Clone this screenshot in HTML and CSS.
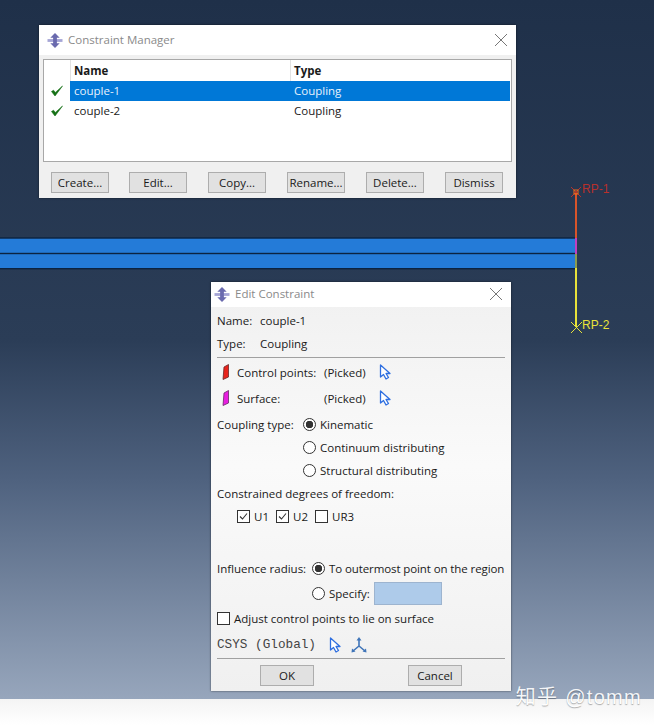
FILE: index.html
```html
<!DOCTYPE html>
<html lang="en">
<head>
  <meta charset="UTF-8" />
  <title>Constraint Manager</title>
  <link rel="stylesheet" href="styles.css">
</head>
<body>
  <svg width="0" height="0" class="defs">
    <symbol id="app" viewBox="0 0 16 16">
      <path d="M8 0 L13 5 H3 Z" fill="#6a6aae"/>
      <path d="M8 16 L13 11 H3 Z" fill="#6a6aae"/>
      <rect x="0" y="6.5" width="16" height="3" fill="#a5a5d6"/>
      <rect x="6" y="4" width="4" height="8" fill="#6a6aae"/>
    </symbol>
    <symbol id="arrow" viewBox="0 0 12 16">
      <path d="M1.5 1 V13 L4.5 10.5 L7 15 L9.5 13.5 L7 9.5 H11 Z" fill="#fff" stroke="#2f6fe0" stroke-width="1.3" stroke-linejoin="round"/>
    </symbol>
    <symbol id="check" viewBox="0 0 12 12">
      <path d="M0.5 6.5 L4 11 L11.5 1 L4.4 7.4 L2.5 5.2 Z" fill="#157015" stroke="#157015" stroke-width="0.6"/>
    </symbol>
    <symbol id="tick" viewBox="0 0 11 11">
      <path d="M2 5.5 L4.5 8 L9 2.5" fill="none" stroke="#333" stroke-width="1.1"/>
    </symbol>
  </svg>

  <!-- model viewport -->
  <svg class="model" width="654" height="725">
    <rect x="0" y="238" width="576" height="31" fill="#247bd8"/>
    <rect x="0" y="237.3" width="576" height="1.4" fill="#0c2340"/>
    <rect x="0" y="252.8" width="576" height="1.4" fill="#0c2340"/>
    <rect x="0" y="268" width="576" height="1.4" fill="#0c2340"/>
    <line x1="576" y1="192" x2="576" y2="240" stroke="#d8542a" stroke-width="2"/>
    <line x1="576" y1="238" x2="576" y2="254" stroke="#c03fc0" stroke-width="2"/>
    <line x1="576" y1="254" x2="576" y2="268" stroke="#8a9a50" stroke-width="2"/>
    <line x1="576" y1="268" x2="576" y2="327" stroke="#e8e23a" stroke-width="2"/>
    <path d="M571 187 L581 197 M581 187 L571 197" stroke="#b8302c" stroke-width="1"/>
    <rect x="574" y="190" width="4" height="4" fill="none" stroke="#f0701c" stroke-width="1"/>
    <path d="M571 322 L582 333 M582 322 L571 333" stroke="#e8e23a" stroke-width="1"/>
    <text x="582" y="193" class="rp rp-red">RP-1</text>
    <text x="582" y="329" class="rp rp-yellow">RP-2</text>
  </svg>

  <div class="window manager">
    <div class="titlebar">
      <svg class="app-icon"><use href="#app"/></svg>
      <span class="title">Constraint Manager</span>
      <span class="close"></span>
    </div>
    <div class="content">
      <div class="list">
        <div class="list-row head">
          <span class="mark"></span>
          <span class="col-name">Name</span>
          <span class="col-type">Type</span>
        </div>
        <div class="list-row selected">
          <span class="mark"><svg class="check"><use href="#check"/></svg></span>
          <span class="col-name">couple-1</span>
          <span class="col-type">Coupling</span>
        </div>
        <div class="list-row">
          <span class="mark"><svg class="check"><use href="#check"/></svg></span>
          <span class="col-name">couple-2</span>
          <span class="col-type">Coupling</span>
        </div>
      </div>
      <div class="actions">
        <button class="btn">Create...</button>
        <button class="btn">Edit...</button>
        <button class="btn">Copy...</button>
        <button class="btn">Rename...</button>
        <button class="btn">Delete...</button>
        <button class="btn">Dismiss</button>
      </div>
    </div>
  </div>

  <div class="window editor">
    <div class="titlebar">
      <svg class="app-icon"><use href="#app"/></svg>
      <span class="title">Edit Constraint</span>
      <span class="close"></span>
    </div>
    <div class="content form">
      <div class="row r-name"><span class="lbl-short">Name:</span><span>couple-1</span></div>
      <div class="row r-type"><span class="lbl-short">Type:</span><span>Coupling</span></div>
      <hr class="rule">
      <div class="row r-pick">
        <svg class="swatch" viewBox="0 0 7 16"><path d="M2 3 L6.5 0.5 V13 L1 15.5 Z" fill="#e8241c" stroke="#6a2a2a" stroke-width="0.8"/></svg>
        <span class="pick-label">Control points:</span>
        <span class="picked">(Picked)</span>
        <svg class="arrow"><use href="#arrow"/></svg>
      </div>
      <div class="row r-pick">
        <svg class="swatch" viewBox="0 0 7 16"><path d="M2 3 L6.5 0.5 V13 L1 15.5 Z" fill="#e81ee0" stroke="#6a2a6a" stroke-width="0.8"/></svg>
        <span class="pick-label">Surface:</span>
        <span class="picked">(Picked)</span>
        <svg class="arrow"><use href="#arrow"/></svg>
      </div>
      <div class="row r-opt">
        <span class="lbl-coupling">Coupling type:</span>
        <span class="radio on"></span><span>Kinematic</span>
      </div>
      <div class="row r-opt indent">
        <span class="radio"></span><span>Continuum distributing</span>
      </div>
      <div class="row r-opt indent">
        <span class="radio"></span><span>Structural distributing</span>
      </div>
      <div class="row r-opt">Constrained degrees of freedom:</div>
      <div class="row r-opt dof">
        <span class="box"><svg class="tick"><use href="#tick"/></svg></span><span class="dof-label">U1</span>
        <span class="box"><svg class="tick"><use href="#tick"/></svg></span><span class="dof-label">U2</span>
        <span class="box"></span><span>UR3</span>
      </div>
      <div class="row r-influence">
        <span class="lbl-influence">Influence radius:</span>
        <span class="radio on"></span><span class="tight">To outermost point on the region</span>
      </div>
      <div class="row r-specify">
        <span class="radio"></span><span>Specify:</span>
        <span class="field"></span>
      </div>
      <div class="row r-adjust">
        <span class="box"></span><span>Adjust control points to lie on surface</span>
      </div>
      <div class="row r-csys">
        <span class="mono">CSYS (Global)</span>
        <svg class="arrow"><use href="#arrow"/></svg>
        <svg class="axes" viewBox="0 0 16 16">
          <path d="M8 2 V9 L2 14 M8 9 L14 14" fill="none" stroke="#3f74b8" stroke-width="1.6"/>
          <path d="M8 0 L10.5 3.5 H5.5 Z" fill="#3f74b8"/>
          <path d="M0.5 15.5 L1 11.5 L4.5 14.5 Z M15.5 15.5 L15 11.5 L11.5 14.5 Z" fill="#3f74b8"/>
        </svg>
      </div>
      <hr class="rule rule-low">
      <div class="footer">
        <button class="btn btn-ok">OK</button>
        <button class="btn btn-ok">Cancel</button>
      </div>
    </div>
  </div>

  <div class="taskbar"></div>
  <div class="watermark">知乎 @tomm</div>
</body>
</html>
```

FILE: styles.css
```css
* {
  box-sizing: border-box;
}
html, body {
  margin: 0;
  height: 100%;
}
body {
  position: relative;
  width: 654px;
  height: 725px;
  overflow: hidden;
  font-family: "Open Sans", "Noto Sans", sans-serif;
  font-size: 11.5px;
  color: #1a1a1a;
  background: linear-gradient(#1f3049 0, #2b3d57 340px, #4f627f 480px, #97a6bc 699px);
}
.defs {
  position: absolute;
}
.model {
  position: absolute;
  left: 0;
  top: 0;
}
.rp {
  font-family: "Liberation Sans", sans-serif;
  font-size: 12px;
}
.rp-red {
  fill: #b8302c;
}
.rp-yellow {
  fill: #e8e23a;
}

/* windows */
.window {
  position: absolute;
  background: #f0f0f0;
  box-shadow: 0 0 2px rgba(0, 0, 0, 0.6);
}
.manager {
  left: 39px;
  top: 25px;
  width: 477px;
  height: 173px;
}
.editor {
  left: 211px;
  top: 282px;
  width: 300px;
  height: 409px;
  background: linear-gradient(#f0f0f0, #fafafa 45%, #f0f0f0);
}
.titlebar {
  display: flex;
  align-items: center;
  background: #fff;
  padding: 0 9px 0 8px;
}
.manager .titlebar {
  height: 30px;
}
.editor .titlebar {
  height: 25px;
  padding-left: 3px;
  padding-bottom: 1px;
}
.app-icon {
  width: 16px;
  height: 15px;
  margin-right: 5px;
}
.title {
  flex: 1;
  color: #8a8a8a;
  position: relative;
  top: -1px;
}
.close {
  width: 12px;
  height: 12px;
  background:
    linear-gradient(45deg, transparent 47%, #777 47%, #777 53%, transparent 53%),
    linear-gradient(-45deg, transparent 47%, #777 47%, #777 53%, transparent 53%);
}

/* list */
.content {
  padding: 4px;
}
.list {
  height: 103px;
  background: #fff;
  border: 1px solid #a8a8a8;
}
.list-row {
  display: flex;
  align-items: center;
  height: 20px;
  padding-right: 1px;
}
.list-row.head {
  height: 21px;
  font-weight: 700;
}
.mark {
  display: flex;
  justify-content: center;
  width: 26px;
}
.check {
  width: 12px;
  height: 12px;
}
.col-name {
  width: 220px;
  height: 100%;
  padding-left: 4px;
  line-height: 20px;
}
.col-type {
  flex: 1;
  height: 100%;
  padding-left: 4px;
  line-height: 20px;
}
.head .col-name,
.head .col-type {
  border-left: 1px solid #e2e2e2;
  padding-left: 3px;
  line-height: 22px;
}
.selected .col-name,
.selected .col-type {
  background: #0078d7;
  color: #e8f2fc;
}
.actions {
  display: flex;
  gap: 21px;
  padding: 10px 0 0 8px;
}
.actions .btn:first-child {
  margin-right: -1px;
}
.btn {
  width: 58px;
  height: 21px;
  padding: 0;
  font: inherit;
  color: #1a1a1a;
  background: #e1e1e1;
  border: 1px solid #adadad;
}

/* edit form */
.form {
  padding: 0 6px 0 6px;
}
.row {
  display: flex;
  align-items: center;
  height: 23px;
}
.r-name {
  margin-top: 2px;
}
.lbl-short {
  width: 43px;
}
.rule {
  margin: 2px 0 0;
  border: 0;
  border-top: 1px solid #a0a0a0;
}
.r-pick {
  height: 26px;
  padding-left: 5px;
}
.rule + .r-pick {
  margin-top: 1px;
}
.r-pick + .r-opt {
  margin-top: 2px;
}
.swatch {
  width: 7px;
  height: 16px;
  margin-right: 8px;
}
.pick-label {
  width: 87px;
}
.picked {
  width: 55px;
}
.arrow {
  flex: none;
  width: 12px;
  height: 16px;
}
.lbl-coupling {
  width: 86px;
}
.indent {
  padding-left: 86px;
}
.radio {
  flex: none;
  width: 13px;
  height: 13px;
  margin-right: 4px;
  background: #fff;
  border: 1px solid #333;
  border-radius: 50%;
}
.radio.on {
  background: radial-gradient(circle, #333 0, #333 3.5px, #fff 4px);
}
.box {
  flex: none;
  display: flex;
  width: 13px;
  height: 13px;
  margin-right: 4px;
  background: #fff;
  border: 1px solid #333;
}
.tick {
  width: 11px;
  height: 11px;
}
.dof {
  padding-left: 20px;
}
.dof-label {
  width: 22px;
}
.r-influence {
  margin-top: 28px;
  height: 25px;
  white-space: nowrap;
}
.lbl-influence {
  flex: none;
  width: 95px;
}
.tight {
  letter-spacing: -0.1px;
}
.r-specify {
  height: 25px;
  padding-left: 95px;
}
.field {
  width: 68px;
  height: 23px;
  margin-left: 4px;
  background: #aecbea;
  border: 1px solid #9db4cf;
}
.r-adjust {
  height: 25px;
}
.r-csys {
  height: 25px;
  margin-top: 1px;
}
.mono {
  width: 112px;
  font-family: "Liberation Mono", monospace;
  font-size: 12.7px;
  color: #444;
}
.axes {
  flex: none;
  width: 16px;
  height: 16px;
  margin-left: 10px;
}
.rule-low {
  margin-top: 1px;
}
.footer {
  display: flex;
  padding: 6px 43px 0;
  justify-content: space-between;
}
.btn-ok {
  width: 54px;
}

/* bottom strip + site watermark */
.taskbar {
  position: absolute;
  left: 0;
  right: 0;
  bottom: 0;
  height: 26px;
  background: linear-gradient(#f4f4f4, #fff);
}
.watermark {
  position: absolute;
  right: 12px;
  bottom: 15px;
  font-family: "Liberation Sans", "Noto Sans CJK SC", sans-serif;
  font-size: 20px;
  letter-spacing: 1.3px;
  color: #fff;
  opacity: 0.9;
  text-shadow: 0 1px 1px rgba(0, 0, 0, 0.35);
}
```
